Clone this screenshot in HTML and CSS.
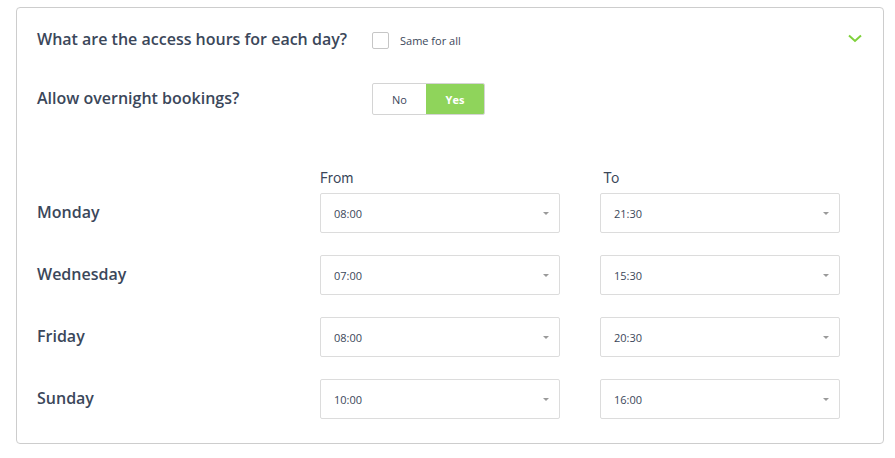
FILE: index.html
```html
<!DOCTYPE html>
<html>
<head>
<meta charset="utf-8">
<link rel="stylesheet" href="styles.css">
</head>
<body>
<div class="card">
  <div class="row row-first">
    <div class="question">What are the access hours for each day?</div>
    <label class="check"><span class="box"></span><span class="check-text">Same for all</span></label>
    <svg class="chevron" width="14" height="9" viewBox="0 0 14 9"><polyline points="1,1.5 7,7 13,1.5" fill="none" stroke="#7fd13b" stroke-width="2"/></svg>
  </div>
  <div class="row row-second">
    <div class="question">Allow overnight bookings?</div>
    <div class="toggle"><span class="opt opt-no">No</span><span class="opt opt-yes">Yes</span></div>
  </div>
  <div class="hours-head">
    <span></span><span class="col-title">From</span><span class="col-title col-to">To</span>
  </div>
  <div class="hours">
    <div class="day">Monday</div>
    <div class="select"><span>08:00</span><i class="caret"></i></div>
    <div class="select"><span>21:30</span><i class="caret"></i></div>
    <div class="day">Wednesday</div>
    <div class="select"><span>07:00</span><i class="caret"></i></div>
    <div class="select"><span>15:30</span><i class="caret"></i></div>
    <div class="day">Friday</div>
    <div class="select"><span>08:00</span><i class="caret"></i></div>
    <div class="select"><span>20:30</span><i class="caret"></i></div>
    <div class="day">Sunday</div>
    <div class="select"><span>10:00</span><i class="caret"></i></div>
    <div class="select"><span>16:00</span><i class="caret"></i></div>
  </div>
</div>
</body>
</html>
```
FILE: styles.css
```css
* { box-sizing: border-box; }
body {
  margin: 0;
  background: #fff;
  font-family: "Open Sans", "Liberation Sans", sans-serif;
  color: #3b475a;
}
.card {
  margin: 7px 0 0 16px;
  width: 868px;
  border: 1px solid #cdcdcd;
  border-radius: 4px;
  padding: 16px 21px 24px 20px;
}
.row {
  display: flex;
  align-items: center;
  height: 32px;
}
.row-second { margin-top: 27px; }
.question {
  flex: 0 0 335px;
  font-size: 16px;
  font-weight: 600;
  color: #3b475a;
  margin-top: -2px;
}
.check {
  display: flex;
  align-items: center;
  gap: 11px;
}
.box {
  width: 17px;
  height: 17px;
  border: 1px solid #c6c6c6;
  border-radius: 2px;
  background: #fff;
}
.check-text {
  font-size: 11px;
  color: #3b475a;
}
.chevron { margin-left: auto; margin-top: -4px; }
.toggle {
  display: flex;
  height: 32px;
  border: 1px solid #d4d4d4;
  border-radius: 2px;
  overflow: hidden;
}
.opt {
  display: flex;
  align-items: center;
  justify-content: center;
  font-size: 11px;
}
.opt-no { width: 53px; color: #3b475a; }
.opt-yes {
  width: 58px;
  background: #8fd45b;
  color: #fff;
  font-weight: 700;
}
.hours-head, .hours {
  display: grid;
  grid-template-columns: 243px 240px 240px;
  column-gap: 40px;
}
.hours-head {
  margin-top: 52px;
  margin-bottom: 6px;
  height: 20px;
  align-items: center;
}
.col-title {
  font-family: "Inter", "Open Sans", sans-serif;
  font-size: 14px;
  color: #3b475a;
}
.col-to { padding-left: 3px; }
.hours {
  row-gap: 22px;
  align-items: center;
}
.day {
  font-size: 16px;
  font-weight: 600;
  color: #3b475a;
  margin-top: -2px;
}
.select {
  height: 40px;
  border: 1px solid #dcdcdc;
  border-radius: 2px;
  display: flex;
  align-items: center;
  justify-content: space-between;
  padding: 0 10px 0 13px;
  font-size: 11px;
  color: #3b475a;
}
.caret {
  width: 0;
  height: 0;
  border-left: 3px solid transparent;
  border-right: 3px solid transparent;
  border-top: 3px solid #9a9a9a;
}
```
